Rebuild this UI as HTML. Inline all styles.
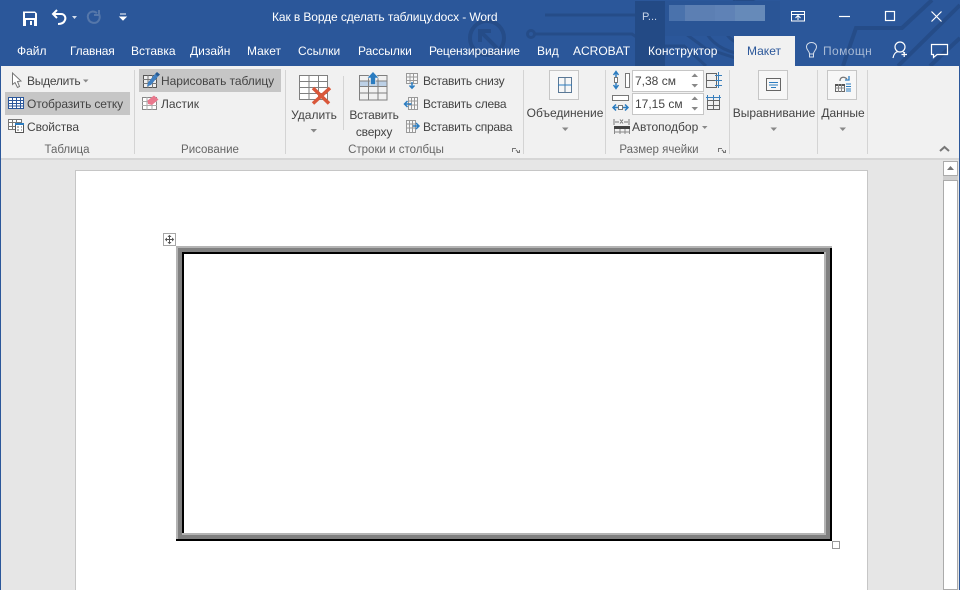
<!DOCTYPE html>
<html lang="ru">
<head>
<meta charset="utf-8">
<title>Как в Ворде сделать таблицу.docx - Word</title>
<style>
html,body{margin:0;padding:0;width:960px;height:590px;overflow:hidden;background:#e6e6e6}
body{position:relative;font-family:"Liberation Sans",sans-serif;font-size:12px;color:#444}
div,span.t{position:absolute}
.t{white-space:nowrap;line-height:16px;height:16px;display:block}
.c{transform:translateX(-50%)}
.w{color:#fff}
.g{color:#666}
.n{letter-spacing:-.25px}
.s{position:absolute;top:70px;width:1px;height:84px;background:#d4d4d4}
.r{position:absolute;background:#000}
svg{position:absolute;left:0;top:0}
.btn{position:absolute;width:28px;height:28px;border:1px solid #c6c6c6;background:#f7f7f7}
.inp{position:absolute;left:632px;width:70px;height:20px;border:1px solid #c6c6c6;background:#fff}
</style>
</head>
<body>
<!-- title bar -->
<div style="left:0;top:0;width:960px;height:66px;background:#2b579a"></div>
<svg width="960" height="66" viewBox="0 0 960 66" fill="none" stroke="#254c88" stroke-width="3">
<circle cx="487" cy="38" r="17" stroke-width="4"/>
<path d="M497 48 L481 32 M480 42 V31 H491" stroke-width="4"/>
<circle cx="531" cy="34" r="3.5"/>
<path d="M535 34 H632 L650 46 H684 L706 66"/>
<path d="M545 15 H660 L705 48 L760 66"/>
<path d="M700 8 C700 50 740 60 770 52 M735 0 C715 30 745 50 775 36"/>
<circle cx="745" cy="22" r="22" stroke-width="3"/>
<path d="M843 66 L856 28 H902 L932 0 M898 66 L960 5 M930 66 L960 38" stroke-width="4"/>
</svg>
<div style="left:635px;top:1px;width:30px;height:65px;background:#234a85"></div>
<div style="left:665px;top:1px;width:115px;height:35px;background:#2a5596"></div>
<div style="left:669px;top:5px;width:22px;height:16px;background:#4a72ac"></div>
<div style="left:685px;top:5px;width:30px;height:16px;background:#5c7fb3"></div>
<div style="left:715px;top:5px;width:20px;height:16px;background:#5f82b6"></div>
<div style="left:735px;top:5px;width:30px;height:16px;background:#668ab9"></div>
<span class="t" style="left:642px;top:9px;color:#c9d5e8;font-size:11px">P...</span>
<span class="t w" style="left:272px;top:9px;font-size:12px;letter-spacing:-.1px">Как в Ворде сделать таблицу.docx - Word</span>

<!-- ribbon -->
<div style="left:1px;top:66px;width:958px;height:92px;background:#f1f1f1"></div>
<div style="left:0;top:158px;width:960px;height:2px;background:#d6d6d6"></div>
<div style="left:0;top:66px;width:1px;height:524px;background:#2b579a"></div>
<div style="left:959px;top:66px;width:1px;height:524px;background:#2b579a"></div>
<div style="left:734px;top:36px;width:61px;height:30px;background:#f1f1f1"></div>

<span class="t w" style="left:17px;top:43px">Файл</span>
<span class="t w" style="left:70px;top:43px;letter-spacing:-.15px">Главная</span>
<span class="t w" style="left:131px;top:43px">Вставка</span>
<span class="t w" style="left:190px;top:43px">Дизайн</span>
<span class="t w" style="left:247px;top:43px">Макет</span>
<span class="t w" style="left:298px;top:43px">Ссылки</span>
<span class="t w" style="left:358px;top:43px">Рассылки</span>
<span class="t w" style="left:429px;top:43px;letter-spacing:-.13px">Рецензирование</span>
<span class="t w" style="left:537px;top:43px">Вид</span>
<span class="t w" style="left:573px;top:43px">ACROBAT</span>
<span class="t w" style="left:648px;top:43px;letter-spacing:.1px">Конструктор</span>
<span class="t" style="left:747px;top:43px;color:#2b579a">Макет</span>
<span class="t" style="left:823px;top:43px;color:#a9bbd6;letter-spacing:.4px">Помощн</span>

<!-- highlights -->
<div style="left:5px;top:92px;width:125px;height:23px;background:#c6c6c6"></div>
<div style="left:139px;top:69px;width:142px;height:23px;background:#c6c6c6"></div>

<!-- separators -->
<div class="s" style="left:134px"></div>
<div class="s" style="left:285px"></div>
<div class="s" style="left:343px;top:76px;height:54px"></div>
<div class="s" style="left:523px"></div>
<div class="s" style="left:605px"></div>
<div class="s" style="left:729px"></div>
<div class="s" style="left:817px"></div>
<div class="s" style="left:867px"></div>

<!-- buttons & inputs -->
<div class="btn" style="left:549px;top:70px"></div>
<div class="btn" style="left:758px;top:70px"></div>
<div class="btn" style="left:827px;top:70px"></div>
<div class="inp" style="top:70px"></div>
<div class="inp" style="top:93px"></div>

<!-- ribbon text -->
<span class="t n" style="left:27px;top:73px">Выделить</span>
<span class="t" style="left:27px;top:96px;letter-spacing:-.12px">Отобразить сетку</span>
<span class="t" style="left:27px;top:119px;letter-spacing:-.1px">Свойства</span>
<span class="t g c" style="left:67px;top:142px;font-size:11.5px">Таблица</span>
<span class="t" style="left:161px;top:73px;letter-spacing:-.06px">Нарисовать таблицу</span>
<span class="t" style="left:161px;top:96px">Ластик</span>
<span class="t g c" style="left:210px;top:142px;font-size:11.5px">Рисование</span>
<span class="t c" style="left:314px;top:107px">Удалить</span>
<span class="t c" style="left:374px;top:107px;letter-spacing:-.2px">Вставить</span>
<span class="t c" style="left:374px;top:124px;letter-spacing:-.2px">сверху</span>
<span class="t n" style="left:423px;top:73px">Вставить снизу</span>
<span class="t n" style="left:423px;top:96px">Вставить слева</span>
<span class="t n" style="left:423px;top:119px">Вставить справа</span>
<span class="t g c" style="left:396px;top:142px;font-size:11.5px">Строки и столбцы</span>
<span class="t c" style="left:565px;top:105px">Объединение</span>
<span class="t" style="left:635px;top:73px">7,38 см</span>
<span class="t" style="left:635px;top:96px">17,15 см</span>
<span class="t" style="left:632px;top:119px">Автоподбор</span>
<span class="t g c" style="left:659px;top:142px;font-size:11.5px">Размер ячейки</span>
<span class="t c" style="left:774px;top:105px">Выравнивание</span>
<span class="t c" style="left:843px;top:105px">Данные</span>

<!-- document -->
<div style="left:75px;top:170px;width:793px;height:420px;background:#fff;border:1px solid #c6c6c6;border-bottom:0;box-sizing:border-box"></div>

<!-- scrollbar -->
<div style="left:943px;top:161px;width:15px;height:429px;background:#cfcfcf"></div>
<div style="left:943px;top:161px;width:15px;height:15px;background:#fff;border:1px solid #ababab;box-sizing:border-box"></div>
<div style="left:943px;top:180px;width:15px;height:410px;background:#fff;border:1px solid #ababab;box-sizing:border-box"></div>

<!-- table frame -->
<div class="r" style="left:176px;top:246px;width:656px;height:2px;background:#b4b4b4"></div>
<div class="r" style="left:176px;top:246px;width:2px;height:293px;background:#b4b4b4"></div>
<div class="r" style="left:178px;top:248px;width:652px;height:4px;background:#808080"></div>
<div class="r" style="left:178px;top:248px;width:4px;height:291px;background:#808080"></div>
<div class="r" style="left:182px;top:252px;width:642px;height:2px"></div>
<div class="r" style="left:182px;top:252px;width:2px;height:281px"></div>
<div class="r" style="left:824px;top:252px;width:2px;height:283px;background:#b4b4b4"></div>
<div class="r" style="left:182px;top:533px;width:644px;height:2px;background:#b4b4b4"></div>
<div class="r" style="left:826px;top:252px;width:4px;height:287px;background:#808080"></div>
<div class="r" style="left:182px;top:535px;width:648px;height:4px;background:#808080"></div>
<div class="r" style="left:830px;top:248px;width:2px;height:293px"></div>
<div class="r" style="left:176px;top:539px;width:656px;height:2px"></div>
<div style="left:832px;top:541px;width:8px;height:8px;background:#fff;border:1px solid #999;box-sizing:border-box"></div>

<!-- icons overlay -->
<svg width="960" height="590" viewBox="0 0 960 590" fill="none">
<!-- move handle -->
<rect x="163.5" y="233.500" width="12" height="12" fill="#fff" stroke="#a6a6a6"/>
<path d="M169.500 236.500V242.500M166.500 239.500H172.500" stroke="#555"/>
<path d="M167.500 237L169.500 234.800L171.500 237ZM167.500 242L169.500 244.200L171.500 242ZM167 237.500L164.800 239.500L167 241.500ZM172 237.500L174.200 239.500L172 241.500Z" fill="#555"/>

<!-- QAT -->
<path d="M23 11.500H35L37 13.500V26H23Z" fill="#fff"/>
<rect x="25" y="13" width="10" height="5" fill="#2b579a"/>
<rect x="26" y="20" width="8" height="6" fill="#2b579a"/>
<rect x="30" y="21" width="2" height="4" fill="#fff"/>
<path d="M54 14H61C65 14 66 18 65 20C64 23 61 24 58 24" stroke="#fff" stroke-width="2"/>
<path d="M57 10L53 14L57 18" stroke="#fff" stroke-width="2"/>
<path d="M72 16H77L74.500 19Z" fill="#d5deeb"/>
<path d="M97 13C91 9 87 14 88 18C89 23 96 25 99 20C100 18 100 16 99 14M99 10V15H94" stroke="#5577aa" stroke-width="2"/>
<path d="M120 14H126M120 17H126L123 20Z" fill="#fff" stroke="#fff" stroke-width="1"/>

<!-- window controls -->
<rect x="791.500" y="11.500" width="13" height="9.500" stroke="#fff"/>
<path d="M791 14.500H805M798 20V16M795.500 18L798 15.500L800.500 18" stroke="#fff"/>
<path d="M839 16.500H850" stroke="#fff" stroke-width="1.200"/>
<rect x="885.500" y="11.500" width="9" height="9" stroke="#fff" stroke-width="1.200"/>
<path d="M931.500 11.500L941.500 21.500M941.500 11.500L931.500 21.500" stroke="#fff" stroke-width="1.200"/>

<!-- tab right icons -->
<path d="M809.500 54H813.500V57H809.500ZM806.500 47C806.500 41 816.500 41 816.500 47C816.500 50 813.500 51 813.500 54H809.500C809.500 51 806.500 50 806.500 47Z" stroke="#d5deeb" fill="none"/>
<circle cx="900" cy="47" r="5" stroke="#fff" stroke-width="1.200"/>
<path d="M893 58C894 53 896 52 898 51.500M903 52L905 53" stroke="#fff" stroke-width="1.200"/>
<path d="M901.500 54.500H907M904.200 52V57" stroke="#fff" stroke-width="1.200"/>
<path d="M931.500 44.500H947.500V54.500H937L933.500 57.500V54.500H931.500Z" stroke="#fff" stroke-width="1.200"/>

<!-- Выделить cursor -->
<path d="M12.500 73L12.500 84.500L15 82.500L17.500 87.500L19.500 86.500L17.500 81.500L21 81Z" fill="#fff" stroke="#777"/>
<path d="M83 79.500H88.500L85.750 82.500Z" fill="#888"/>

<!-- show grid -->
<g stroke="#2b579a" shape-rendering="crispEdges">
<rect x="8.500" y="97.500" width="15" height="11" fill="#fff"/>
<path d="M8 100.500H24M8 103.500H24M8 106H24M12.500 97V109M16.500 97V109M20.500 97V109"/>
</g>

<!-- properties -->
<g shape-rendering="crispEdges">
<rect x="8.500" y="119.500" width="13" height="10" fill="#fff" stroke="#777"/>
<path d="M8 122.500H22M8 126.500H22M12.500 119V130M16.500 119V130" stroke="#777"/>
<rect x="15.500" y="123.500" width="8" height="9" fill="#fff" stroke="#555"/>
<rect x="15" y="123" width="9" height="2" fill="#2b7cc0"/>
<path d="M17 127H19M21 127H22M17 130H19M21 130H22" stroke="#666"/>
</g>

<!-- draw table -->
<g shape-rendering="crispEdges">
<rect x="143.500" y="75.500" width="13" height="12" fill="#eee" stroke="#555"/>
<path d="M143 79.500H157M143 83.500H157M148 75V88M152.500 75V88" stroke="#777"/>
</g>
<path d="M148 82.500L155 74L158 76.500L151 85L147 86.500Z" fill="#3f7fc1"/>
<path d="M155 74L157 72L160 74.500L158 76.500Z" fill="#255a94"/>

<!-- eraser -->
<g shape-rendering="crispEdges">
<rect x="142.500" y="97.500" width="14" height="12" fill="#fff" stroke="#888"/>
<path d="M142 101.500H157M142 105.500H157M147 97V110M152 97V110" stroke="#aaa"/>
</g>
<path d="M147.500 100.500L154 95.500L158.500 99.500L152 105L148 104Z" fill="#e9788d"/>

<!-- delete table -->
<g stroke="#808080" shape-rendering="crispEdges">
<rect x="299.500" y="75.500" width="28" height="24" fill="#fff"/>
<path d="M299 81.500H328M299 87.500H328M299 93.500H328M309 75V100M318.500 75V100"/>
</g>
<path d="M313 88L329 103.500M330 88L313 103.500" stroke="#d9573a" stroke-width="3.500"/>
<path d="M310.500 129H317L313.750 132.500Z" fill="#888"/>

<!-- insert above -->
<g shape-rendering="crispEdges">
<rect x="359" y="81" width="28" height="5" fill="#bcd0e6"/>
<g stroke="#808080">
<rect x="359.500" y="75.500" width="27.500" height="24.500"/>
<path d="M359 81H387M359 86.500H387M359 93H387M368.500 75V100M378 75V100"/>
</g>
</g>
<path d="M373 71.500L379 78H375.500V84.500H370.500V78H367Z" fill="#2b7cc0" stroke="#f1f1f1" stroke-width=".6"/>

<!-- insert below / left / right -->
<g stroke="#999" shape-rendering="crispEdges" fill="#f8f8f8">
<rect x="406.500" y="73.500" width="11" height="10"/>
<path d="M406 77H418M406 80.500H418M410 73V84M413.500 73V84" fill="none"/>
<rect x="408.500" y="97.500" width="9" height="12"/>
<path d="M408 101H418M408 105H418M411.500 97V110M414.500 97V110" fill="none"/>
<rect x="406.500" y="120.500" width="9" height="12"/>
<path d="M406 124H416M406 128H416M409.500 120V133M412.500 120V133" fill="none"/>
</g>
<path d="M412 82V88M409.500 85.500L412 88.200L414.500 85.500" stroke="#2b7cc0" stroke-width="1.500"/>
<path d="M411.500 104H405M407.500 101L404.500 104L407.500 107" stroke="#2b7cc0" stroke-width="1.500"/>
<path d="M413 126H418.500M416 123L419 126L416 129" stroke="#2b7cc0" stroke-width="1.500"/>

<!-- launchers -->
<g stroke="#777" shape-rendering="crispEdges">
<path d="M512.500 152V148.500H516M718.500 152V148.500H722"/>
<path d="M516 150L519 153M517 152.500H519.500V150M722 150L725 153M723 152.500H725.500V150"/>
</g>

<!-- merge -->
<path d="M558.500 77.500H571.500V92.500H558.500ZM565 77V93" stroke="#5a7896" shape-rendering="crispEdges"/>
<path d="M558 85H572" stroke="#2b7cc0" shape-rendering="crispEdges"/>
<path d="M562 127.500H568.500L565.250 131Z" fill="#888"/>

<!-- cell height/width -->
<path d="M616 72V88M613.500 75L616 71.500L618.500 75M613.500 85L616 88.500L618.500 85" stroke="#2b7cc0" stroke-width="1.500"/>
<rect x="625.500" y="73.500" width="4" height="14" stroke="#777" fill="#fff" shape-rendering="crispEdges"/>
<path d="M614.500 77.500H617.500V82.500H614.500Z" stroke="#777" fill="#fff"/>
<rect x="612.500" y="95.500" width="16" height="5" stroke="#777" fill="#fff" shape-rendering="crispEdges"/>
<path d="M613 107.500H628M616 104.500L613 107.500L616 110.500M625 104.500L628 107.500L625 110.500" stroke="#2b7cc0" stroke-width="1.500"/>
<rect x="618.500" y="105.500" width="4" height="4" fill="#fff" stroke="#777"/>

<!-- autofit -->
<path d="M614 119V125M629 119V125M615 122H619M624 122H628M620 119.500L623 123.500M623 119.500L620 123.500" stroke="#777"/>
<rect x="614" y="126" width="16" height="3" fill="#444"/>
<path d="M614.500 129V134M620 129V134M625 129V134M629.500 129V134M614 132H630" stroke="#888" shape-rendering="crispEdges"/>
<path d="M702 126H707.500L704.750 129Z" fill="#888"/>

<!-- spinner arrows -->
<path d="M691.500 77H698L694.750 73.500ZM691.500 84H698L694.750 87.500ZM691.500 100H698L694.750 96.500ZM691.500 107H698L694.750 110.500Z" fill="#888"/>

<!-- distribute -->
<g shape-rendering="crispEdges">
<path d="M706.500 73.500H716.500V87.500H706.500ZM706 80.500H717" stroke="#666"/>
<path d="M718.500 72V88M715 75.500H722M715 80.500H722M715 85.500H722" stroke="#3a80bd"/>
<path d="M707.500 100.500H719.500V109.500H707.500ZM713.500 100V110M707 105.500H720" stroke="#666"/>
<path d="M706 97.500H721M707.500 95V100M713.500 95V100M719.500 95V100" stroke="#3a80bd"/>
</g>

<!-- align -->
<rect x="766.500" y="78.500" width="14" height="12" stroke="#666" shape-rendering="crispEdges"/>
<path d="M769 82.500H778M769 85H778M771 87.500H776" stroke="#2b7cc0" shape-rendering="crispEdges"/>
<path d="M770.500 127.500H777L773.750 131Z" fill="#888"/>

<!-- data -->
<g shape-rendering="crispEdges">
<rect x="835.500" y="84.500" width="9" height="7" stroke="#666"/>
<rect x="835" y="84" width="10" height="2" fill="#555"/>
<path d="M835 88H845M838.500 84V92M841.500 84V92" stroke="#888"/>
<path d="M846 84H851M846 86.500H851M846 89H851M846 91H851" stroke="#2b7cc0"/>
</g>
<path d="M840 81C840 77 844 76 847 79" stroke="#777" stroke-width="1.300"/>
<path d="M845 80H849V76" stroke="#2b7cc0" stroke-width="1.300"/>
<path d="M839.500 127.500H846L842.750 131Z" fill="#888"/>

<!-- small chevrons -->
<path d="M940 151L944.500 147L949 151" stroke="#777" stroke-width="2"/>
<path d="M947 170H954L950.500 166Z" fill="#777"/>
</svg>
</body>
</html>
